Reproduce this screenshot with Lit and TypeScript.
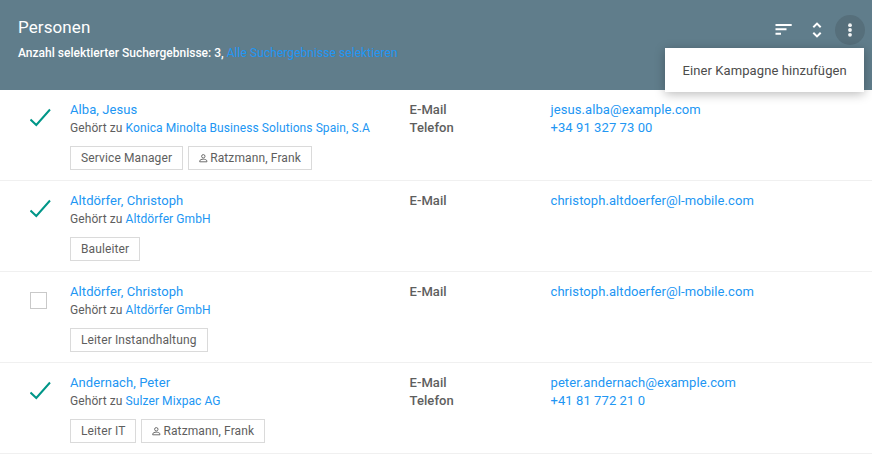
import { LitElement, html, css, nothing } from "lit";
import { customElement, property } from "lit/decorators.js";

interface Person {
  name: string;
  company: string;
  selected: boolean;
  role: string;
  owner?: string;
  email: string;
  phone?: string;
}

const people: Person[] = [
  {
    name: "Alba, Jesus",
    company: "Konica Minolta Business Solutions Spain, S.A",
    selected: true,
    role: "Service Manager",
    owner: "Ratzmann, Frank",
    email: "jesus.alba@example.com",
    phone: "+34 91 327 73 00",
  },
  {
    name: "Altdörfer, Christoph",
    company: "Altdörfer GmbH",
    selected: true,
    role: "Bauleiter",
    email: "christoph.altdoerfer@l-mobile.com",
  },
  {
    name: "Altdörfer, Christoph",
    company: "Altdörfer GmbH",
    selected: false,
    role: "Leiter Instandhaltung",
    email: "christoph.altdoerfer@l-mobile.com",
  },
  {
    name: "Andernach, Peter",
    company: "Sulzer Mixpac AG",
    selected: true,
    role: "Leiter IT",
    owner: "Ratzmann, Frank",
    email: "peter.andernach@example.com",
    phone: "+41 81 772 21 0",
  },
];

@customElement("person-row")
class PersonRow extends LitElement {
  @property({ attribute: false }) person!: Person;

  static styles = css`
    :host {
      display: grid;
      grid-template-columns: 40px 339.5px 141px 1fr;
      box-sizing: border-box;
      height: 91px;
      padding: 11px 18px 0 30px;
      border-bottom: 1px solid #f0f0f0;
      font-size: 13px;
      line-height: 18px;
      letter-spacing: 0.08px;
      color: #5e5e5e;
      white-space: nowrap;
    }
    a {
      color: #2196f3;
      text-decoration: none;
    }
    .mark {
      padding-top: 7px;
    }
    .mark svg {
      display: block;
    }
    .box {
      box-sizing: border-box;
      width: 17px;
      height: 17px;
      margin-top: 2px;
      border: 1px solid #c9c9c9;
    }
    .company {
      font-size: 12px;
    }
    .tags {
      display: flex;
      gap: 5px;
      margin-top: 9px;
    }
    .tag {
      display: flex;
      align-items: center;
      box-sizing: border-box;
      height: 24px;
      padding: 0 10px;
      border: 1px solid #dadada;
      font-size: 12px;
      letter-spacing: 0.12px;
    }
    .tag svg {
      margin-right: 2px;
    }
    .labels {
      font-weight: 500;
    }
  `;

  render() {
    const p = this.person;
    return html`
      <div class="mark">
        ${p.selected
          ? html`<svg width="21" height="19" viewBox="0 0 21 19" fill="none" stroke="#009688" stroke-width="2">
              <path d="M.5 11.500 6.300 17 20 1.500" />
            </svg>`
          : html`<div class="box"></div>`}
      </div>
      <div>
        <div><a>${p.name}</a></div>
        <div class="company">Gehört zu <a>${p.company}</a></div>
        <div class="tags">
          <span class="tag">${p.role}</span>
          ${p.owner
            ? html`<span class="tag">
                <svg width="9" height="9" viewBox="0 0 9 9" fill="none" stroke="#5e5e5e" stroke-width=".9">
                  <circle cx="4.300" cy="2.300" r="1.700" />
                  <path d="M.7 7.800V7C.7 5.800 2.700 5.200 4.300 5.200S7.900 5.800 7.900 7v.8Z" />
                </svg>${p.owner}</span
              >`
            : nothing}
        </div>
      </div>
      <div class="labels">
        <div>E-Mail</div>
        ${p.phone ? html`<div>Telefon</div>` : nothing}
      </div>
      <div>
        <div><a>${p.email}</a></div>
        ${p.phone ? html`<div><a>${p.phone}</a></div>` : nothing}
      </div>
    `;
  }
}

@customElement("app-root")
class AppRoot extends LitElement {
  static styles = css`
    :host {
      display: block;
      height: 455px;
      overflow: hidden;
      background: #fff;
      font-family: Roboto, sans-serif;
    }
    header {
      position: relative;
      display: flex;
      justify-content: space-between;
      box-sizing: border-box;
      height: 90px;
      padding: 15px 7px 0 18px;
      background: #607d8b;
      color: #fff;
      white-space: nowrap;
    }
    h2 {
      margin: 0;
      font-size: 17px;
      font-weight: 400;
      line-height: 25px;
      letter-spacing: 0.1px;
    }
    .summary {
      margin-top: 4px;
      font-size: 12px;
      font-weight: 500;
      line-height: 18px;
      letter-spacing: 0.01px;
    }
    .summary a {
      color: #2196f3;
      font-weight: 400;
      letter-spacing: 0.06px;
    }
    .actions {
      display: flex;
      gap: 3px;
      height: 30px;
    }
    .action {
      display: flex;
      align-items: center;
      justify-content: center;
      width: 30px;
      height: 30px;
      border-radius: 50%;
    }
    .action.open {
      background: #566f7b;
    }
    .menu {
      position: absolute;
      z-index: 1;
      top: 48px;
      right: 8px;
      box-sizing: border-box;
      width: 199px;
      height: 44px;
      padding-left: 17.5px;
      background: #fff;
      box-shadow: 0 2px 10px rgba(0, 0, 0, 0.28);
      color: #4c4c4c;
      font-size: 13px;
      line-height: 45px;
      letter-spacing: 0.09px;
    }
  `;

  render() {
    return html`
      <header>
        <div>
          <h2>Personen</h2>
          <div class="summary">Anzahl selektierter Suchergebnisse: 3, <a>Alle Suchergebnisse selektieren</a></div>
        </div>
        <div class="actions">
          <span class="action">
            <svg width="18" height="12" viewBox="0 0 18 12" fill="#fff">
              <path d="M.5 0h16.200v2H.5zM.5 4.300h11v2H.5zM.5 8.700H6v2H.5z" />
            </svg>
          </span>
          <span class="action">
            <svg width="10" height="16" viewBox="0 0 10 16" fill="none" stroke="#fff" stroke-width="2">
              <path d="M1.300 5.200 5 1.600l3.700 3.600M1.300 10.800 5 14.400l3.700-3.600" />
            </svg>
          </span>
          <span class="action open">
            <svg width="4" height="14" viewBox="0 0 4 14" fill="#f2f4f5">
              <circle cx="2" cy="2.200" r="1.900" />
              <circle cx="2" cy="7" r="1.900" />
              <circle cx="2" cy="11.800" r="1.900" />
            </svg>
          </span>
        </div>
        <div class="menu">Einer Kampagne hinzufügen</div>
      </header>
      <main>${people.map((p) => html`<person-row .person=${p}></person-row>`)}</main>
    `;
  }
}
